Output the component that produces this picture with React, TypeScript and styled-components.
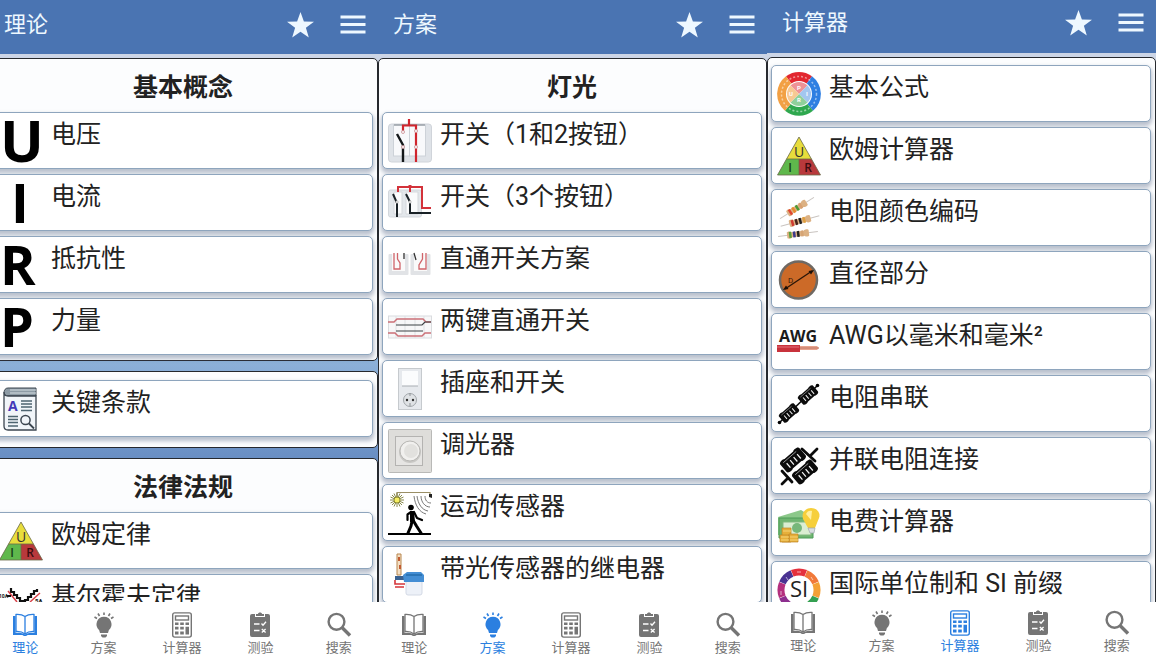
import React from 'react';
import styled, { createGlobalStyle } from 'styled-components';

const GlobalStyle = createGlobalStyle`
  * { box-sizing: border-box; }
  body {
    margin: 0;
    background: #fff;
    color: #222;
    font-family: Roboto, "Noto Sans CJK SC", sans-serif;
    overflow: hidden;
  }
  button {
    font: inherit;
    color: inherit;
    border: 0;
    padding: 0;
    background: none;
    text-align: left;
    cursor: pointer;
  }
`;

const Board = styled.main`
  display: grid;
  grid-template-columns: repeat(3, minmax(0, 1fr));
  height: 100vh;
  margin: 0 7px 0 -11px;
`;

const Phone = styled.section`
  display: flex;
  flex-direction: column;
  min-width: 0;
  min-height: 0;
`;

const TopBar = styled.header<{ $compact?: boolean }>`
  display: flex;
  align-items: center;
  gap: 26px;
  flex: none;
  height: ${p => (p.$compact ? 53 : 54)}px;
  padding: 0 12px ${p => (p.$compact ? 7 : 5)}px 15px;
  background: #4a74b2;
  color: #eef8ff;
`;

const Title = styled.h1`
  flex: 1;
  margin: 0;
  font-size: 22px;
  line-height: 32px;
  font-weight: 400;
`;

const BarButton = styled.button`
  display: flex;
  svg { display: block; }
`;

const Content = styled.div`
  flex: 1;
  min-height: 0;
  overflow: hidden;
  padding-top: 4px;
  display: flex;
  flex-direction: column;
  gap: 10px;
  background: linear-gradient(#ccd5e6 0, #ccd5e6 30px, #8fb3da 300px, #6389c0 420px);
`;

const Panel = styled.section<{ $top: number; $bottom: number }>`
  flex: none;
  border: 1px solid #26292e;
  border-radius: 5px;
  padding: ${p => p.$top}px 4px ${p => p.$bottom}px 3px;
  background: #fcfdfe;
`;

const Heading = styled.h2`
  margin: 0;
  padding-top: 5px;
  font-size: 25px;
  line-height: 48px;
  font-weight: 700;
  text-align: center;
`;

const List = styled.div`
  display: flex;
  flex-direction: column;
  gap: 5px;
`;

const Card = styled.button`
  display: flex;
  align-items: center;
  gap: 8px;
  height: 57px;
  padding: 0 5px;
  border: 1px solid #8ea5bd;
  border-radius: 5px;
  background: #fff;
  box-shadow: 0 3px 4px 1px rgba(80, 98, 130, 0.4);
  svg { flex: none; display: block; }
`;

const CardText = styled.span`
  align-self: flex-start;
  padding-top: 6px;
  font-size: 25px;
  line-height: 32px;
  white-space: nowrap;
`;

const TabBar = styled.nav<{ $compact?: boolean }>`
  display: grid;
  grid-template-columns: repeat(5, minmax(0, 1fr));
  align-items: start;
  flex: none;
  height: 56px;
  margin-left: -3px;
  padding-top: ${p => (p.$compact ? 8 : 10)}px;
  background: #fff;
`;

const Tab = styled.button<{ $active: boolean }>`
  display: flex;
  flex-direction: column;
  align-items: center;
  color: ${p => (p.$active ? '#2b7fe0' : '#757575')};
  font-size: 13px;
  line-height: 20px;
  svg { display: block; }
`;

const Svg = ({ children }: { children: React.ReactNode }) => (
  <svg width="44" height="44" viewBox="0 0 44 44" fill="none" aria-hidden="true">{children}</svg>
);

const Letter = ({ char, size, y }: { char: string; size: number; y: number }) => (
  <Svg>
    <text x={char === 'I' ? 21 : 5} y={y} textAnchor={char === 'I' ? 'middle' : 'start'} dx={char === 'I' ? 0 : -4} fontFamily="Open Sans, sans-serif" fontWeight="700" fontSize={size} fill="#000">{char}</text>
  </Svg>
);

const Glossary = () => (
  <Svg>
    <path d="M9 1H37V9H8C4 9 4 1 9 1Z" fill="#8d9ba5" stroke="#3c4650" />
    <path d="M11 3H37M11 6H37" stroke="#d4dde2" />
    <path d="M5 5V39C5 42 6 43 9 43H37V9H9C6 9 5 8 5 5Z" fill="#f1f5f9" stroke="#3c4650" strokeWidth="1.3" />
    <text x="9" y="24" fontFamily="Open Sans, sans-serif" fontWeight="700" fontSize="14" fill="#4438b8">A</text>
    <path d="M22 14H33M22 17H33M22 20H33M22 23.500H33M9 29.500H19M9 32.500H19M9 35.500H19M9 39H19" stroke="#4d6470" strokeWidth="1.500" />
    <circle cx="26.500" cy="33" r="4.600" stroke="#3c4650" strokeWidth="1.500" />
    <path d="M30 36.500L35 41.500" stroke="#3c4650" strokeWidth="1.800" />
  </Svg>
);

const OhmTriangle = () => (
  <Svg>
    <path d="M22 3L34.500 25H9.500Z" fill="#e8dd3c" />
    <path d="M9.500 25H22V41H0.500Z" fill="#5fb84c" />
    <path d="M22 25H34.500L43.500 41H22Z" fill="#b8393c" />
    <path d="M22 3L43.500 41H0.500ZM9.500 25H34.500M22 25V41" stroke="#6a6a4a" strokeWidth="0.800" />
    <g fontFamily="Open Sans, sans-serif" fill="#333" textAnchor="middle">
      <text x="22" y="23" fontSize="14">U</text>
      <text x="13" y="38" fontSize="12" fill="#16401a" fontWeight="600">I</text>
      <text x="31" y="38" fontSize="12" fill="#3c0c10" fontWeight="600">R</text>
    </g>
  </Svg>
);

const Kirchhoff = () => (
  <Svg>
    <path d="M12 7V11H15V14H18V17H21V20H24V23H26V19H29V16H32V13H35V10H38V8" stroke="#111" strokeWidth="2.200" />
    <path d="M9 10L18 21M31 21L41 12" stroke="#d8434a" strokeWidth="1.500" />
    <path d="M8 15H12M24 22V42" stroke="#111" strokeWidth="2" />
    <text x="0" y="17" fontSize="5" fontWeight="700" fill="#111">10A</text>
    <text x="36" y="22" fontSize="6" fontWeight="700" fill="#111">5A</text>
  </Svg>
);

const SwitchOne = () => (
  <Svg>
    <rect x="0.500" y="5" width="43" height="38" rx="3" fill="#dfe3e8" stroke="#d0d4da" />
    <rect x="5.500" y="6" width="16" height="31" fill="#f8f9fb" stroke="#cdd2d8" />
    <rect x="21.500" y="6" width="16" height="31" fill="#f8f9fb" stroke="#cdd2d8" />
    <path d="M6 6H37" stroke="#7d858d" />
    <path d="M21 0V6M15 12V6.500H28V43" stroke="#d0252d" strokeWidth="2.200" />
    <path d="M9 15L15 26V43" stroke="#15191b" strokeWidth="2.400" />
    <g fill="#fff" stroke="#c98b90" strokeWidth="0.800"><circle cx="15" cy="13" r="1.500" /><circle cx="28" cy="12" r="1.500" /><circle cx="28" cy="28" r="1.500" /><circle cx="15" cy="28" r="1.500" /></g>
  </Svg>
);

const SwitchTwo = () => (
  <Svg>
    <rect x="0.500" y="9" width="33" height="27" rx="2" fill="#e3e7eb" stroke="#d3d7dc" />
    <path d="M6 11V33H14V11ZM18 11V33H30V11Z" fill="#fafbfc" stroke="#d5d8dc" />
    <path d="M10 11V6H34V27H43M22 6V11" stroke="#d3323a" strokeWidth="2" />
    <path d="M22 4V7" stroke="#d3323a" strokeWidth="3" />
    <path d="M5 13L9 22V36M18 13L22 21V32H43" stroke="#192126" strokeWidth="2" />
    <g fill="#fff" stroke="#aaa" strokeWidth="0.700"><circle cx="9" cy="21" r="1.200" /><circle cx="22" cy="21" r="1.200" /></g>
  </Svg>
);

const PassThrough = () => (
  <Svg>
    <rect x="0.500" y="11" width="20" height="21" rx="1" fill="#e1e3e6" /><rect x="4" y="11" width="13" height="17" fill="#fafafa" />
    <rect x="22.500" y="11" width="20" height="21" rx="1" fill="#e1e3e6" /><rect x="26" y="11" width="13" height="17" fill="#fafafa" />
    <path d="M9.500 10V16L12 20V26H6V10M34.500 10V16L31 22V26H38V10" stroke="#d0646a" strokeWidth="1.300" />
    <path d="M16 10V16M26 10L28 17" stroke="#333" strokeWidth="1.300" />
  </Svg>
);

const TwoKey = () => (
  <Svg>
    <rect x="0.500" y="11" width="43" height="22" fill="#f7f7f8" stroke="#dadcdf" />
    <path d="M8 11V33M17 11V33M27 11V33M36 11V33" stroke="#dfe1e4" />
    <path d="M0 17H6L9 14H35L38 17H43M0 28H7L10 31H34L37 28H43" stroke="#cc7077" strokeWidth="1.400" />
    <path d="M8 20H34L37 17H43M8 26H35" stroke="#3d4245" strokeWidth="1.200" />
  </Svg>
);

const SocketSwitch = () => (
  <Svg>
    <rect x="10.500" y="1.500" width="23" height="41" fill="#e6e9ed" stroke="#c6cace" />
    <rect x="14" y="4" width="16" height="15" fill="#fbfcfd" />
    <path d="M14 19H30" stroke="#a7adb2" />
    <circle cx="22" cy="33" r="6.500" fill="#dfe2e5" stroke="#a1a6aa" />
    <path d="M22 26V29M22 36V39" stroke="#8d9296" />
    <circle cx="19" cy="33" r="1.200" fill="#333" /><circle cx="25" cy="33" r="1.200" fill="#333" />
  </Svg>
);

const Dimmer = () => (
  <Svg>
    <rect x="0.500" y="0.500" width="43" height="43" rx="1" fill="#deddda" stroke="#b9b9b7" />
    <rect x="7.500" y="7.500" width="27" height="29" fill="#e6e5e3" stroke="#b4b3b1" />
    <circle cx="22" cy="23" r="11" fill="#c9c8c5" /><circle cx="22" cy="22" r="10" fill="#f1f0ee" stroke="#b9b8b5" /><circle cx="23" cy="22" r="7" fill="#e2e1de" />
  </Svg>
);

const Motion = () => (
  <Svg>
    <path d="M9 8V1.500H42V6" stroke="#9a8f66" strokeWidth="1.200" />
    <path d="M9 2V16M2 9H16M4 4L14 14M14 4L4 14M6 2.500L12 15.500M12 2.500L6 15.500M2.500 6L15.500 12M15.500 6L2.500 12" stroke="#7a7c38" strokeWidth="0.900" />
    <circle cx="9" cy="9" r="3" fill="#f5ee62" stroke="#8e8b30" />
    <path d="M41 3H44V7L41 6Z" fill="#222" />
    <path d="M37 5C37 9 39 12 43 12M33 5C33 11 37 16 42 16M29 5C30 13 34 19 40 20M26 5C27 14 31 21 38 23" stroke="#777" strokeWidth="1" />
    <circle cx="23" cy="16.500" r="2.800" fill="#000" />
    <path d="M26 21L29 27L34 29M23 21L19.500 23.500V29" stroke="#000" strokeWidth="2.200" strokeLinecap="round" strokeLinejoin="round" />
    <path d="M22 20H26L27 31H22Z" fill="#000" />
    <path d="M24 30L23 35L20 42M25.500 30L28.500 35L33 42" stroke="#000" strokeWidth="3" strokeLinecap="round" strokeLinejoin="round" />
    <path d="M0 43H43" stroke="#000" strokeWidth="2" />
  </Svg>
);

const LightRelay = () => (
  <Svg>
    <path d="M9 1H13V22H9Z" fill="#f3dfc5" stroke="#b8874f" />
    <path d="M11 4V8M12 12V16" stroke="#c35b31" strokeWidth="2" />
    <path d="M7 23H17V27H7Z" fill="#3b6291" />
    <path d="M7 27V31H17M7 34H16" stroke="#d5353a" strokeWidth="1.600" />
    <rect x="18" y="27" width="16" height="15" rx="2" fill="#edf1f8" stroke="#d3d9e5" />
    <path d="M15 22L19 19H33L36 22V29H16Z" fill="#448ed4" />
    <path d="M18 22H34" stroke="#256cad" strokeWidth="1.500" />
  </Svg>
);

const FormulaWheel = () => (
  <Svg>
    <path d="M22 22L9 4.300A22 22 0 0 1 35 4.300Z" fill="#e2262f" />
    <path d="M22 22L35 4.300A22 22 0 0 1 36 38.800Z" fill="#2e7fe2" />
    <path d="M22 22L36 38.800A22 22 0 0 1 8 38.800Z" fill="#2fa84f" />
    <path d="M22 22L8 38.800A22 22 0 0 1 9 4.300Z" fill="#f2a044" />
    <circle cx="22" cy="22" r="17.500" stroke="#fff" strokeOpacity="0.500" strokeWidth="1.500" strokeDasharray="2 2" />
    <circle cx="22" cy="22" r="13" fill="#fff" />
    <path d="M22 22L13.500 13.500A12 12 0 0 1 30.500 13.500Z" fill="#ee9296" />
    <path d="M22 22L30.500 13.500A12 12 0 0 1 30.500 30.500Z" fill="#a3c6ef" />
    <path d="M22 22L30.500 30.500A12 12 0 0 1 13.500 30.500Z" fill="#8fd09b" />
    <path d="M22 22L13.500 30.500A12 12 0 0 1 13.500 13.500Z" fill="#f7c993" />
    <g fontSize="6" fill="#fff" fontWeight="700" textAnchor="middle"><text x="22" y="18">P</text><text x="30" y="24">I</text><text x="22" y="30">R</text><text x="14" y="24">U</text></g>
  </Svg>
);

const Resistor = ({ x, y, turn, bands }: { x: number; y: number; turn: number; bands: string[] }) => (
  <g transform={`translate(${x} ${y}) rotate(${turn})`}>
    <path d="M-20 0H20" stroke="#c9c4c0" strokeWidth="1" />
    <path d="M-11 -2.500C-11 -4 -7 -4 -6 -2.500H6C7 -4 11 -4 11 -2.500V2.500C11 4 7 4 6 2.500H-6C-7 4 -11 4 -11 2.500Z" fill="#dcb183" />
    {bands.map((c, i) => <rect key={i} x={-9 + i * 4} y="-3" width="2.500" height="6" fill={c} />)}
  </g>
);

const ColorCode = () => (
  <Svg>
    <Resistor x={20} y={12} turn={-32} bands={['#e0452f', '#e78b2f', '#4c9a35', '#d8a070']} />
    <Resistor x={23} y={25} turn={-15} bands={['#cf3a30', '#49231a', '#222', '#e0a040']} />
    <Resistor x={21} y={38} turn={-7} bands={['#59a03c', '#3a3a8c', '#222', '#d6a474']} />
  </Svg>
);

const Diameter = () => (
  <Svg>
    <circle cx="21.500" cy="22" r="18.500" fill="#cc6a28" stroke="#6f6963" strokeWidth="2.500" />
    <path d="M8 31L35 13" stroke="#2a1609" strokeWidth="1.300" />
    <path d="M6 32L9 27.500L11.500 31ZM37 12L34 16.500L31.500 13Z" fill="#1c0e05" />
    <text x="11" y="25" fontSize="8" fill="#3a1c08">D</text>
  </Svg>
);

const Awg = () => (
  <Svg>
    <text x="21" y="22" textAnchor="middle" fontFamily="Open Sans, sans-serif" fontWeight="700" fontSize="16" fill="#1b1b1b">AWG</text>
    <rect x="0" y="25" width="23" height="7" fill="#c8323c" />
    <path d="M0 27H22" stroke="#e5717a" />
    <path d="M23 26H40L42 28L40 30H23Z" fill="#e7a48f" />
    <path d="M23 28H42" stroke="#b96a55" strokeWidth="0.800" />
  </Svg>
);

const BlackResistor = ({ x, y, scale = 1 }: { x: number; y: number; scale?: number }) => (
  <g transform={`translate(${x} ${y}) rotate(-41) scale(${scale})`}>
    <path d="M-11 -4C-11 -6.500 -6 -6.500 -5 -5.500H5C6 -6.500 11 -6.500 11 -4V4C11 6.500 6 6.500 5 5.500H-5C-6 6.500 -11 6.500 -11 4Z" fill="#0b0b0b" />
    <path d="M-6 -1.500V3.500M-2 -1.500V3.500M2 -1.500V3.500M6 -1.500V3.500" stroke="#f4f4f4" strokeWidth="1.100" />
    <path d="M-8 -3.800H7" stroke="#aaa" strokeWidth="0.700" />
  </g>
);

const Series = () => (
  <Svg>
    <path d="M2 41L41 3" stroke="#0b0b0b" strokeWidth="1.600" />
    <circle cx="2.500" cy="40.500" r="1.800" fill="#000" /><circle cx="40.500" cy="3.500" r="1.800" fill="#000" />
    <BlackResistor x={12} y={31} scale={0.900} />
    <BlackResistor x={31} y={13} scale={0.900} />
  </Svg>
);

const Parallel = () => (
  <Svg>
    <path d="M5 40L10 35M5 27L15 38M25 5L38 17M34 11L40 5" stroke="#0b0b0b" strokeWidth="2.800" strokeLinecap="round" />
    <BlackResistor x={16} y={16} scale={1.150} />
    <BlackResistor x={28} y={28} scale={1.150} />
  </Svg>
);

const Bill = () => (
  <Svg>
    <path d="M1 11L24 4L35 11V29H1Z" fill="#8cc88a" />
    <path d="M2 12H36V32H2Z" fill="#6fb571" stroke="#4f9c58" />
    <path d="M6 16H34V29H6Z" fill="#dbeed2" stroke="#81b97f" />
    <circle cx="20" cy="22" r="5" fill="#76b77a" />
    <path d="M31 22L26 13C24 6 29 2 34 2C40 2 44 7 42 12L38 22Z" fill="#f6cf3b" />
    <path d="M29 8C30 5 33 4 35 5L34 14Z" fill="#fff0a0" />
    <path d="M31 22H38L37 27H33Z" fill="#d9dee2" stroke="#9ca5a9" strokeWidth="0.700" />
    <g fill="#e6af3a" stroke="#bf8426" strokeWidth="0.700"><path d="M5 22H14V36H5Z" /><path d="M3 29H12V36H3ZM12 28H21V36H12Z" /></g>
    <path d="M4 31H12M4 34H12M13 31H21M13 34H21M6 25H14" stroke="#f6d477" />
  </Svg>
);

const SiUnits = () => {
  const colors = ['#e5303c', '#f1793a', '#f4a136', '#35a052', '#159b8b', '#8d2f8f', '#b4307e', '#4a3392'];
  const r = 18;
  const c = 2 * Math.PI * r;
  return (
    <Svg>
      {colors.map((color, i) => (
        <circle key={color} cx="22" cy="22" r={r} stroke={color} strokeWidth="7" strokeDasharray={`${c / 8 - 0.4} ${c}`} transform={`rotate(${i * 45 - 112} 22 22)`} />
      ))}
      <path d="M20 4H24M9 9L11 12M34 9L36 12M4 23V27" stroke="#fff" strokeOpacity="0.600" />
      <text x="22" y="29" textAnchor="middle" fontFamily="Open Sans, sans-serif" fontSize="22" fill="#222">SI</text>
    </Svg>
  );
};

const StarIcon = () => (
  <svg width="27" height="26" viewBox="0 0 27 26" aria-hidden="true">
    <path d="M13.500 0L16.900 9.400L27 9.700L18.900 15.800L21.800 25.500L13.500 19.800L5.200 25.500L8.100 15.800L0 9.700L10.100 9.400Z" fill="currentColor" />
  </svg>
);

const MenuIcon = () => (
  <svg width="26" height="26" viewBox="0 0 26 26" aria-hidden="true">
    <path d="M0.500 5H25.500M0.500 12.500H25.500M0.500 20H25.500" stroke="currentColor" strokeWidth="3" />
  </svg>
);

const TabSvg = ({ children }: { children: React.ReactNode }) => (
  <svg width="26" height="26" viewBox="0 0 26 26" fill="none" aria-hidden="true">{children}</svg>
);

const tabs = [
  {
    label: '理论',
    icon: (
      <TabSvg>
        <path d="M13 4.500C10.500 2.800 7 2.300 4 2.500V19.500C7.500 19.300 10.500 20 13 22C15.500 20 18.500 19.300 22 19.500V2.500C19 2.300 15.500 2.800 13 4.500V22" stroke="currentColor" strokeWidth="1.300" />
        <path d="M3.500 4H1V23H10.500C11.500 24.300 14.500 24.300 15.500 23H25V4H22.500V20.800C18 20.500 15.500 21 13 22.500C10.500 21 8 20.500 3.500 20.800Z" fill="currentColor" />
      </TabSvg>
    ),
  },
  {
    label: '方案',
    icon: (
      <TabSvg>
        <path d="M13 4.800A7.600 7.600 0 0 1 17.800 18.200L17 21H9L8.200 18.200A7.600 7.600 0 0 1 13 4.800Z" fill="currentColor" />
        <path d="M13 0.500V3M7 1.500L8.500 4M19 1.500L17.500 4M3.500 5L6 6.500M22.500 5L20 6.500" stroke="currentColor" strokeWidth="1.600" />
        <path d="M10 22.500H16V24L14.500 25.500H11.500L10 24Z" fill="currentColor" />
      </TabSvg>
    ),
  },
  {
    label: '计算器',
    icon: (
      <TabSvg>
        <rect x="3.700" y="0.900" width="18.600" height="24.200" rx="2" stroke="currentColor" strokeWidth="1.400" />
        <rect x="6.500" y="4" width="13" height="4" stroke="currentColor" strokeWidth="1.400" />
        <path d="M6 10.500H9.500V13H6ZM11.200 10.500H14.800V13H11.200ZM16.500 10.500H20V13H16.500ZM6 14.800H9.500V17.500H6ZM11.200 14.800H14.800V17.500H11.200ZM16.500 14.800H20V22.500H16.500ZM6 19.500H9.500V22.500H6ZM11.200 19.500H14.800V22.500H11.200Z" fill="currentColor" />
      </TabSvg>
    ),
  },
  {
    label: '测验',
    icon: (
      <TabSvg>
        <path d="M5 2H8V5H18V2H21Q23 2 23 4V23Q23 25 21 25H5Q3 25 3 23V4Q3 2 5 2Z" fill="currentColor" />
        <path d="M9 4V2H11C11 0 15 0 15 2H17V4Z" fill="currentColor" />
        <path d="M7 12H12.500M7 18.500H12.500M14.500 11.500L16 13.200L19 9.800M14.800 17L18.600 20.500M18.600 17L14.800 20.500" stroke="#fff" strokeWidth="1.300" />
      </TabSvg>
    ),
  },
  {
    label: '搜索',
    icon: (
      <TabSvg>
        <circle cx="10.500" cy="9.800" r="7.900" stroke="currentColor" strokeWidth="2.400" />
        <path d="M16 15.500L24 23.500" stroke="currentColor" strokeWidth="3.400" />
      </TabSvg>
    ),
  },
];

type Item = [string, React.ReactNode];
type Group = { heading?: string; top: number; bottom: number; items: Item[] };
type Screen = { title: string; compact?: boolean; groups: Group[] };

const screens: Screen[] = [
  {
    title: '理论',
    groups: [
      {
        heading: '基本概念', top: 0, bottom: 5,
        items: [
          ['电压', <Letter char="U" size={58} y={43} />],
          ['电流', <Letter char="I" size={54} y={42} />],
          ['抵抗性', <Letter char="R" size={54} y={42} />],
          ['力量', <Letter char="P" size={54} y={42} />],
        ],
      },
      { top: 8, bottom: 10, items: [['关键条款', <Glossary />]] },
      { heading: '法律法规', top: 0, bottom: 5, items: [['欧姆定律', <OhmTriangle />], ['基尔霍夫定律', <Kirchhoff />]] },
    ],
  },
  {
    title: '方案',
    groups: [
      {
        heading: '灯光', top: 0, bottom: 5,
        items: [
          ['开关（1和2按钮）', <SwitchOne />],
          ['开关（3个按钮）', <SwitchTwo />],
          ['直通开关方案', <PassThrough />],
          ['两键直通开关', <TwoKey />],
          ['插座和开关', <SocketSwitch />],
          ['调光器', <Dimmer />],
          ['运动传感器', <Motion />],
          ['带光传感器的继电器', <LightRelay />],
        ],
      },
    ],
  },
  {
    title: '计算器',
    compact: true,
    groups: [
      {
        top: 7, bottom: 5,
        items: [
          ['基本公式', <FormulaWheel />],
          ['欧姆计算器', <OhmTriangle />],
          ['电阻颜色编码', <ColorCode />],
          ['直径部分', <Diameter />],
          ['AWG以毫米和毫米²', <Awg />],
          ['电阻串联', <Series />],
          ['并联电阻连接', <Parallel />],
          ['电费计算器', <Bill />],
          ['国际单位制和 SI 前缀', <SiUnits />],
        ],
      },
    ],
  },
];

export default function App() {
  return (
    <>
      <GlobalStyle />
      <Board>
        {screens.map(screen => (
          <Phone key={screen.title}>
            <TopBar $compact={screen.compact}>
              <Title>{screen.title}</Title>
              <BarButton type="button" aria-label="收藏"><StarIcon /></BarButton>
              <BarButton type="button" aria-label="菜单"><MenuIcon /></BarButton>
            </TopBar>
            <Content>
              {screen.groups.map((group, i) => (
                <Panel key={i} $top={group.top} $bottom={group.bottom}>
                  {group.heading && <Heading>{group.heading}</Heading>}
                  <List>
                    {group.items.map(([label, icon]) => (
                      <Card key={label} type="button">
                        {icon}
                        <CardText>{label}</CardText>
                      </Card>
                    ))}
                  </List>
                </Panel>
              ))}
            </Content>
            <TabBar $compact={screen.compact}>
              {tabs.map(tab => (
                <Tab key={tab.label} type="button" $active={tab.label === screen.title}>
                  {tab.icon}
                  <span>{tab.label}</span>
                </Tab>
              ))}
            </TabBar>
          </Phone>
        ))}
      </Board>
    </>
  );
}
